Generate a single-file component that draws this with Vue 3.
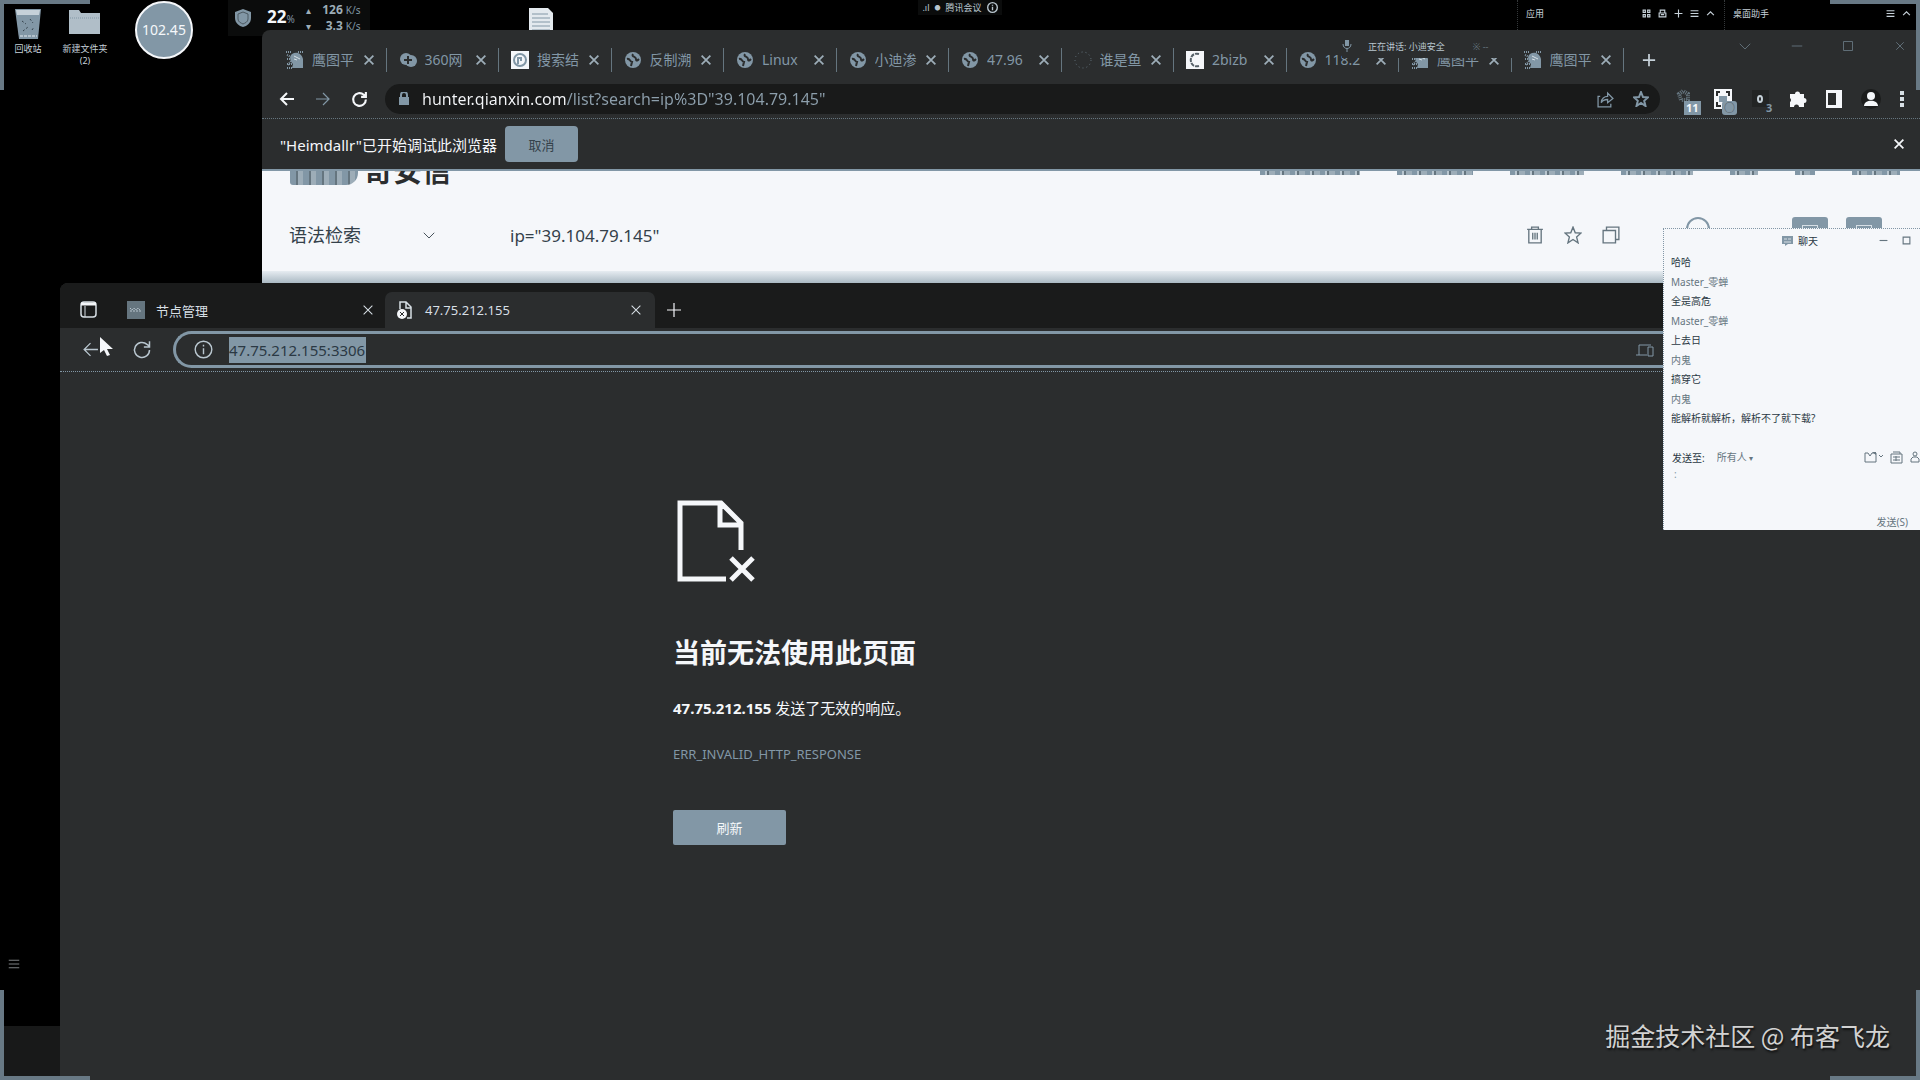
<template>
  <div class="desktop">
    <svg class="sprite" aria-hidden="true">
      <symbol id="close" viewBox="0 0 16 16"><path d="M3 3l10 10M13 3L3 13" /></symbol>
      <symbol id="plus" viewBox="0 0 16 16"><path d="M8 1v14M1 8h14" /></symbol>
      <symbol id="back" viewBox="0 0 16 16"><path d="M15 8H2M8 2L2 8l6 6" /></symbol>
      <symbol id="forward" viewBox="0 0 16 16"><path d="M1 8h13M8 2l6 6-6 6" /></symbol>
      <symbol id="reload" viewBox="0 0 16 16"><path d="M14 8a6 6 0 1 1-2-4.500L14 5M14 1v4.500H9.500" /></symbol>
      <symbol id="info" viewBox="0 0 16 16"><circle cx="8" cy="8" r="7" /><path d="M8 7v5M8 4v1.500" /></symbol>
      <symbol id="menu" viewBox="0 0 16 16"><path d="M1 3h14M1 8h14M1 13h14" /></symbol>
      <symbol id="up" viewBox="0 0 16 16"><path d="M2 11l6-6 6 6" /></symbol>
      <symbol id="down" viewBox="0 0 16 16"><path d="M1 5l7 7 7-7" /></symbol>
      <symbol id="square" viewBox="0 0 16 16"><path d="M2 2h12v12H2z" /></symbol>
      <symbol id="minus" viewBox="0 0 16 16"><path d="M1 8h14" /></symbol>
      <symbol id="grid" viewBox="0 0 16 16"><path d="M2 2h4v4H2zM10 2h4v4h-4zM2 10h4v4H2zM10 10h4v4h-4z" /></symbol>
      <symbol id="lockbox" viewBox="0 0 16 16"><path d="M4 7V2h8v5M2 7h12v7H2zM5 10h6" /></symbol>
      <symbol id="star" viewBox="0 0 16 16"><path d="M8 1l2 5 5 .4-3.800 3.400L12.500 15 8 12l-4.500 3 1.300-5.200L1 6.400 6 6z" /></symbol>
      <symbol id="share" viewBox="0 0 16 16"><path d="M3 5H1v10h12v-3M4 11c0-4 3-6 6-6V2l5 5-5 4V8c-3 0-5 1-6 3z" /></symbol>
      <symbol id="trash" viewBox="0 0 16 16"><path d="M1 3h14M5 3V1h6v2M2.500 3v12h11V3M6 6v6M8 6v6M10 6v6" /></symbol>
      <symbol id="copy" viewBox="0 0 16 16"><path d="M1 4h11v11H1zM4 4V1h11v11h-3" /></symbol>
      <symbol id="globe" viewBox="0 0 18 18">
        <circle cx="9" cy="9" r="8" fill="#8297a6" stroke="none" />
        <path d="M3 8c3-1 3 3 5 3l-1 4M9 3c-2 3 3 2 3 5s2 1 3 0" stroke="#2b2d2e" stroke-width="2" />
      </symbol>
      <symbol id="eagle" viewBox="0 0 18 18">
        <path d="M6 3c5-3 10 0 11 5v9H6l1-4C5 11 3 7 5 4z" fill="#8297a6" stroke="none" />
        <path d="M0 1h6M12 1h5M1 4l4 2M1 8h4M5 10l-3 4M1 13h5M1 17h6" stroke="#8297a6" stroke-dasharray="1 1" stroke-width="2" />
        <path d="M8 5l6 3M8 8l3 1" stroke="#d7dfe5" />
      </symbol>
      <symbol id="cross360" viewBox="0 0 18 18">
        <circle cx="7" cy="8" r="6" fill="#8297a6" stroke="none" /><circle cx="12" cy="10" r="6" fill="#8297a6" stroke="none" />
        <path d="M9 5v8M5 9h8" stroke="#2b2d2e" stroke-width="2" />
      </symbol>
      <symbol id="search-site" viewBox="0 0 18 18">
        <path d="M0 0h18v18H0z" fill="#f5f7fa" stroke="none" /><circle cx="9" cy="9" r="6" stroke="#8297a6" stroke-width="2" /><path d="M7 13V7h3v3" stroke="#8297a6" stroke-width="2" />
      </symbol>
      <symbol id="loading" viewBox="0 0 18 18"><circle cx="9" cy="9" r="8" stroke="#65757f" stroke-dasharray="1 3" /></symbol>
      <symbol id="crescent" viewBox="0 0 18 18">
        <path d="M0 0h18v18H0z" fill="#f5f7fa" stroke="none" /><path d="M13 3C2 0 2 18 13 15" stroke="#556068" stroke-width="2" stroke-dasharray="4 1" />
      </symbol>
    </svg>

    <i class="edge top-left"></i><i class="edge top-right"></i>
    <i class="edge bottom-left"></i><i class="edge bottom-right"></i>
    <div class="taskbar-stub"></div>

    <!-- Desktop shortcuts -->
    <div class="shortcuts">
      <a class="shortcut" href="#">
        <svg width="28" height="32" viewBox="0 0 28 32"><path d="M1 1h26l-3 30H5z" fill="#8297a6" /><path d="M2 2h24l-1 5H3z" fill="#c6d1d9" /><path d="M8 13l4 3M16 11l3 4M9 23l5-4M18 22l2-3" stroke="#34414a" stroke-dasharray="2 2" /><path d="M6 28h17" stroke="#e6ecf1" stroke-dasharray="3 1" /></svg>
        <span>回收站</span>
      </a>
      <a class="shortcut" href="#">
        <svg width="32" height="32" viewBox="0 0 32 32"><path d="M0 2h10l2 3h19v21H0z" fill="#b0bec8" /><path d="M1 10h29" stroke="#8297a6" stroke-dasharray="1 1" /></svg>
        <span>新建文件夹<br />(2)</span>
      </a>
    </div>
    <div class="timer">102.45</div>
    <svg class="text-file" width="24" height="24" viewBox="0 0 24 24"><path d="M0 0h19l5 5v19H0z" fill="#e3e9ee" /><path d="M3 6h16M3 10h18M3 14h18M3 18h18M3 22h18" stroke="#8297a6" /></svg>
    <svg class="list-mark icon" width="12" height="14"><use href="#menu" /></svg>

    <div class="monitor">
      <svg width="18" height="20" viewBox="0 0 18 20"><path d="M9 1l8 3v6c0 5-4 8-8 9-4-1-8-4-8-9V4z" fill="#8297a6" /><path d="M9 4l5 2v5c0 3-3 4-5 5-2-1-5-2-5-5V6z" fill="none" stroke="#4b5860" /></svg>
      <div class="usage"><strong>22</strong><small>%</small></div>
      <div class="speeds">
        <div><i>▴</i><b>126</b><small>K/s</small></div>
        <div><i>▾</i><b>3.3</b><small>K/s</small></div>
      </div>
    </div>

    <div class="meeting-bar">
      <span>.ıl</span><span>●</span><span>腾讯会议</span>
      <svg class="icon bold" width="11" height="11"><use href="#info" /></svg>
    </div>

    <div class="panels">
      <div class="panel apps">
        <span>应用</span>
        <button v-for="n in ['grid', 'lockbox', 'plus', 'menu', 'up']" :key="n" class="plain" :aria-label="n">
          <svg class="icon bold" width="9" height="9"><use :href="'#' + n" /></svg>
        </button>
      </div>
      <div class="panel">
        <span>桌面助手</span>
        <button v-for="n in ['menu', 'up']" :key="n" class="plain" :aria-label="n">
          <svg class="icon bold" width="9" height="9"><use :href="'#' + n" /></svg>
        </button>
      </div>
    </div>

    <!-- Chrome window -->
    <section class="chrome">
      <div class="tabstrip">
        <div class="tabs">
          <div v-for="(tab, i) in tabs" :key="i" class="tab">
            <svg class="favicon" width="18" height="18"><use :href="'#' + tab.icon" /></svg>
            <span class="tab-label">{{ tab.label }}</span>
            <button class="plain" aria-label="关闭标签页"><svg class="icon bold" width="14" height="14"><use href="#close" /></svg></button>
          </div>
        </div>
        <button class="plain new-tab" aria-label="新标签页"><svg class="icon bold" width="14" height="14"><use href="#plus" /></svg></button>
        <div class="window-controls">
          <button v-for="n in ['down', 'minus', 'square', 'close']" :key="n" class="plain" :aria-label="n">
            <svg class="icon" width="12" height="12"><use :href="'#' + n" /></svg>
          </button>
        </div>
      </div>

      <div class="toolbar">
        <button class="plain" aria-label="后退"><svg class="icon bold" width="16" height="16"><use href="#back" /></svg></button>
        <button class="plain dim" aria-label="前进"><svg class="icon" width="16" height="16"><use href="#forward" /></svg></button>
        <button class="plain" aria-label="重新加载"><svg class="icon bold" width="17" height="17"><use href="#reload" /></svg></button>
        <div class="omnibox">
          <svg width="10" height="14" viewBox="0 0 10 14"><path d="M0 5h10v8H0z" fill="#8297a6" /><path d="M2 6V3a3 3 0 0 1 6 0v3" fill="none" stroke="#8297a6" stroke-width="2" /></svg>
          <input v-model="url" class="url" aria-label="地址" />
          <svg class="icon" width="17" height="17"><use href="#share" /></svg>
          <svg class="icon bold" width="16" height="16"><use href="#star" /></svg>
        </div>
        <div class="extensions">
          <button class="plain ext" aria-label="Heimdallr">
            <svg width="20" height="20" viewBox="0 0 20 20"><path d="M4 5l4-3 5 3v6H6z" fill="none" stroke="#65757f" stroke-dasharray="1 1" stroke-width="4" /></svg>
            <b class="badge">11</b>
          </button>
          <button class="plain ext" aria-label="二维码">
            <svg width="20" height="20" viewBox="0 0 20 20"><path d="M1 0h18v20H1z" fill="#f5f7fa" /><path d="M4 7V3h3M13 3h3v4M4 13v4h4" fill="none" stroke="#2b2d2e" stroke-width="2" /><path d="M6 7h8v6H6z" fill="#8297a6" /></svg>
            <b class="badge round">○</b>
          </button>
          <button class="plain ext" aria-label="代理">
            <svg width="20" height="20" viewBox="0 0 20 20"><path d="M1 1h17v17H1z" fill="#222424" /><ellipse cx="9" cy="10" rx="2" ry="3" fill="none" stroke="#c6d1d9" stroke-width="2" /></svg>
            <b class="badge bare">3</b>
          </button>
          <button class="plain ext" aria-label="扩展程序">
            <svg width="18" height="18" viewBox="0 0 18 18"><path d="M1 4h5a2.500 2.500 0 1 1 5 0h4v4a2.500 2.500 0 1 1 0 5v4h-5a2.500 2.500 0 0 0-5 0H1v-5a2.500 2.500 0 0 0 0-4z" fill="#f5f7fa" /></svg>
          </button>
          <button class="plain ext" aria-label="侧边栏">
            <svg width="18" height="18" viewBox="0 0 18 18"><path d="M1 0h16v18H1zM3 3v12h8V3z" fill="#f5f7fa" fill-rule="evenodd" /></svg>
          </button>
          <button class="plain ext" aria-label="用户">
            <svg width="20" height="20" viewBox="0 0 20 20"><circle cx="10" cy="10" r="10" fill="#1b1c1c" /><circle cx="10" cy="7" r="4" fill="#f5f7fa" /><path d="M3 17c0-7 14-7 14 0z" fill="#f5f7fa" /></svg>
          </button>
          <button class="plain ext" aria-label="菜单">
            <svg width="6" height="18" viewBox="0 0 6 18"><path d="M1 1h4v4H1zM1 7h4v4H1zM1 13h4v4H1z" fill="#d7dfe5" /></svg>
          </button>
        </div>
      </div>

      <div class="infobar">
        <span>"Heimdallr"已开始调试此浏览器</span>
        <button class="cancel">取消</button>
        <button class="plain push" aria-label="关闭"><svg class="icon bold" width="14" height="14"><use href="#close" /></svg></button>
      </div>

      <div class="page">
        <div class="page-head">
          <span class="logo-mark"></span>
          <strong class="logo">奇安信</strong>
          <div class="nav-tail">
            <i v-for="(w, i) in navWidths" :key="i" :style="{ width: w + 'px' }"></i>
          </div>
        </div>
        <div class="search-row">
          <label class="mode">
            <select aria-label="检索方式"><option>语法检索</option></select>
            <svg class="icon" width="12" height="12"><use href="#down" /></svg>
          </label>
          <input v-model="query" class="query" aria-label="查询语句" />
          <div class="search-icons">
            <button v-for="n in ['trash', 'star', 'copy']" :key="n" class="plain" :aria-label="n">
              <svg class="icon" width="18" height="18"><use :href="'#' + n" /></svg>
            </button>
          </div>
          <div class="search-actions">
            <svg width="24" height="36" viewBox="0 0 24 36"><circle cx="12" cy="12" r="11" fill="none" stroke="#8297a6" stroke-width="2" /></svg>
            <button class="action" aria-label="搜索"><i></i></button>
            <button class="action" aria-label="导出"><i></i></button>
          </div>
        </div>
        <div class="page-foot"></div>
      </div>
    </section>

    <div class="speaking">
      <svg width="10" height="12" viewBox="0 0 10 12"><path d="M3 0h4v6H3z" fill="#8297a6" /><path d="M1 4c0 6 8 6 8 0M5 9v3" fill="none" stroke="#8297a6" /></svg>
      <span>正在讲话: 小迪安全</span>
      <span class="dots">※ ⁃⁃</span>
    </div>

    <!-- Edge window -->
    <section class="msedge">
      <div class="edge-tabs">
        <svg width="17" height="17" viewBox="0 0 17 17"><rect x="1" y="1" width="15" height="15" rx="3" fill="none" stroke="#d7dfe5" stroke-width="1.500" /><path d="M1 3h15" stroke="#f5f7fa" stroke-width="3" /><path d="M5 5v11" stroke="#d7dfe5" /></svg>
        <div class="edge-tab first">
          <svg width="18" height="18" viewBox="0 0 18 18"><path d="M0 0h18v18H0z" fill="#65757f" /><path d="M3 10h12M3 7l2 2 2-2 2 2 2-2 2 2" stroke="#b9c6cf" fill="none" stroke-dasharray="2 1" /></svg>
          <span>节点管理</span>
          <button class="plain push" aria-label="关闭标签页"><svg class="icon" width="14" height="14"><use href="#close" /></svg></button>
        </div>
        <div class="edge-tab active">
          <svg width="18" height="20" viewBox="0 0 18 20"><path d="M4 9V2h6l5 5v11h-4M10 2v6h5" fill="none" stroke="#d7dfe5" stroke-width="1.500" /><circle cx="6" cy="14" r="5" fill="#f5f7fa" /><path d="M4 12l4 4M8 12l-4 4" stroke="#2b2d2e" /></svg>
          <span>47.75.212.155</span>
          <button class="plain push" aria-label="关闭标签页"><svg class="icon" width="14" height="14"><use href="#close" /></svg></button>
        </div>
        <button class="plain" aria-label="新建标签页"><svg class="icon" width="16" height="16"><use href="#plus" /></svg></button>
      </div>

      <div class="edge-bar">
        <button class="plain" aria-label="后退"><svg class="icon" width="17" height="17"><use href="#back" /></svg></button>
        <button class="plain" aria-label="刷新页面"><svg class="icon" width="20" height="20"><use href="#reload" /></svg></button>
        <div class="edge-address">
          <svg class="icon" width="19" height="19"><use href="#info" /></svg>
          <input v-model="address" class="selected" aria-label="地址栏" />
          <svg class="push" width="18" height="14" viewBox="0 0 18 14"><path d="M0 12h11M3 12V2h12M12 4h5v9h-5z" fill="none" stroke="#8297a6" /></svg>
        </div>
      </div>

      <main class="error">
        <svg width="78" height="82" viewBox="0 0 78 82">
          <path d="M49 79H3V3h41l20 20v27M43 3v22h21" fill="none" stroke="#f5f7fa" stroke-width="5" />
          <path d="M54 58l22 22M76 58L54 80" stroke="#f5f7fa" stroke-width="5" />
        </svg>
        <h1>当前无法使用此页面</h1>
        <p><strong>47.75.212.155</strong> 发送了无效的响应。</p>
        <p class="code">ERR_INVALID_HTTP_RESPONSE</p>
        <button class="refresh">刷新</button>
      </main>
    </section>

    <svg class="pointer" width="14" height="20" viewBox="0 0 14 20"><path d="M1 0v16l4-3 3 6 3-1-3-6h6z" fill="#f5f7fa" /></svg>

    <!-- Chat window -->
    <section class="chat">
      <div class="chat-head">
        <svg width="11" height="10" viewBox="0 0 11 10"><path d="M0 0h11v8H6l-3 2V8H0z" fill="#8297a6" /><path d="M2 3h3M6 3h3M2 6h7" stroke="#d7dfe5" /></svg>
        <span>聊天</span>
        <div class="chat-controls">
          <button v-for="n in ['minus', 'square', 'close']" :key="n" class="plain" :aria-label="n">
            <svg class="icon bold" width="9" height="9"><use :href="'#' + n" /></svg>
          </button>
        </div>
      </div>
      <ul class="messages">
        <li v-for="(m, i) in messages" :key="i" :class="{ author: m.author }">{{ m.text }}</li>
      </ul>
      <div class="send-to">
        <label for="target">发送至:</label>
        <select id="target"><option>所有人</option></select>
        <span class="caret">▾</span>
        <div class="chat-tools">
          <svg width="20" height="12" viewBox="0 0 20 12"><path d="M1 2h3l2 3 2-3h4v9H1zM15 4l2 2 2-2" fill="none" stroke="#65757f" /><path d="M8 1h4v3z" fill="#65757f" /></svg>
          <svg width="13" height="13" viewBox="0 0 13 13"><path d="M1 3h11v9H1zM3 1h7v2M3 6h7M3 9h7M6 5v5" fill="none" stroke="#65757f" /></svg>
          <svg width="11" height="12" viewBox="0 0 11 12"><circle cx="6" cy="3" r="2" fill="none" stroke="#65757f" /><path d="M2 11V8l2-2h4l2 2v3z" fill="none" stroke="#65757f" /></svg>
        </div>
      </div>
      <textarea v-model="draft" aria-label="消息"></textarea>
      <button class="plain send">发送(S)</button>
    </section>

    <div class="watermark">掘金技术社区 @ 布客飞龙</div>
  </div>
</template>

<script setup>
import { ref } from 'vue';

const url = ref('hunter.qianxin.com/list?search=ip%3D"39.104.79.145"');
const query = ref('ip="39.104.79.145"');
const address = ref('47.75.212.155:3306');
const draft = ref(':');

const tabs = [
  { icon: 'eagle', label: '鹰图平' },
  { icon: 'cross360', label: '360网' },
  { icon: 'search-site', label: '搜索结' },
  { icon: 'globe', label: '反制溯' },
  { icon: 'globe', label: 'Linux' },
  { icon: 'globe', label: '小迪渗' },
  { icon: 'globe', label: '47.96' },
  { icon: 'loading', label: '谁是鱼' },
  { icon: 'crescent', label: '2bizb' },
  { icon: 'globe', label: '118.2' },
  { icon: 'eagle', label: '鹰图平' },
  { icon: 'eagle', label: '鹰图平' },
];

const navWidths = [100, 76, 74, 72, 28, 20, 48];

const messages = [
  { text: '哈哈' },
  { text: 'Master_零蝉', author: true },
  { text: '全是高危' },
  { text: 'Master_零蝉', author: true },
  { text: '上去日' },
  { text: '内鬼', author: true },
  { text: '搞穿它' },
  { text: '内鬼', author: true },
  { text: '能解析就解析，解析不了就下载?' },
];
</script>

<style>
body { background: #000; }
</style>

<style scoped>
* { box-sizing: border-box; }

.desktop {
  position: relative;
  min-height: 100vh;
  overflow: hidden;
  background: #000;
  color: #f5f7fa;
  font-family: "Noto Sans", "Noto Sans CJK SC", sans-serif;
  font-size: 15px;
}

.sprite { position: absolute; width: 0; height: 0; }
.icon { fill: none; stroke: currentColor; stroke-width: 1.2; }
.icon.bold { stroke-width: 2; }
.favicon { fill: none; flex: none; }
svg { display: block; flex: none; }

.plain {
  display: flex;
  align-items: center;
  justify-content: center;
  background: none;
  border: 0;
  padding: 0;
  color: inherit;
  font: inherit;
}

input, select, textarea {
  background: none;
  border: 0;
  padding: 0;
  color: inherit;
  font: inherit;
  outline: none;
}

select { appearance: none; }
.push { margin-left: auto; }

/* Screen frame */
.edge {
  position: absolute;
  width: 90px;
  height: 90px;
  border: 0 solid #687985;
  z-index: 5;
  pointer-events: none;
}

.top-left { top: 0; left: 0; border-width: 4px 0 0 4px; }
.top-right { top: 0; right: 0; border-width: 4px 4px 0 0; }
.bottom-left { bottom: 0; left: 0; border-width: 0 0 4px 4px; }
.bottom-right { bottom: 0; right: 0; border-width: 0 4px 4px 0; }

.taskbar-stub {
  position: absolute;
  left: 0;
  bottom: 0;
  width: 60px;
  height: 54px;
  background: #181919;
}

/* Desktop items */
.shortcuts {
  position: absolute;
  top: 8px;
  left: 5px;
  display: flex;
  gap: 11px;
}

.shortcut {
  display: flex;
  flex-direction: column;
  align-items: center;
  gap: 3px;
  width: 46px;
  color: #c6d1d9;
  font-size: 9px;
  line-height: 12px;
  text-align: center;
  text-decoration: none;
  white-space: nowrap;
}

.timer {
  position: absolute;
  top: 1px;
  left: 135px;
  width: 58px;
  height: 58px;
  border: 2px solid #f5f7fa;
  border-radius: 50%;
  background: #8297a6;
  line-height: 54px;
  font-size: 14px;
  text-align: center;
}

.text-file { position: absolute; top: 8px; left: 529px; }
.list-mark { position: absolute; top: 957px; left: 8px; color: #8b8f92; }

.monitor {
  position: absolute;
  top: 0;
  left: 228px;
  display: flex;
  align-items: center;
  width: 142px;
  height: 36px;
  padding-left: 6px;
  background: #0b0c0c;
}

.usage { display: flex; align-items: baseline; margin-left: 15px; line-height: 20px; }
.usage strong { font-size: 17px; }
.usage small, .speeds small { color: #8297a6; font-size: 10px; }
.speeds { margin-left: 11px; color: #9dadb8; font-size: 12px; line-height: 16px; }
.speeds div { display: grid; grid-template-columns: 10px 24px 20px; gap: 3px; }
.speeds i { font-size: 10px; font-style: normal; }
.speeds b { text-align: right; }

.meeting-bar {
  position: absolute;
  top: 0;
  left: 918px;
  display: flex;
  align-items: center;
  justify-content: center;
  gap: 5px;
  width: 84px;
  height: 15px;
  background: #0b0c0c;
  color: #b9c6cf;
  font-size: 9px;
}

.meeting-bar span:nth-child(2) { font-size: 6px; }

.panels {
  position: absolute;
  top: 0;
  right: 0;
  display: flex;
  height: 30px;
  font-size: 9px;
  color: #c6d1d9;
}

.panel {
  display: flex;
  align-items: center;
  gap: 7px;
  width: 196px;
  padding: 0 9px 4px 8px;
  border-left: 1px dotted #34383a;
}

.panel span { margin-right: auto; }
.apps { width: 207px; }

/* Chrome */
.chrome {
  position: absolute;
  top: 30px;
  left: 262px;
  right: 0;
  background: #2b2d2e;
  border-radius: 8px 0 0 0;
}

.tabstrip {
  display: flex;
  align-items: center;
  height: 52px;
  padding: 8px 0 0 12px;
  color: #9dadb8;
}

.tabs { display: flex; flex: 1; min-width: 0; }

.tab {
  display: flex;
  align-items: center;
  flex: 1;
  min-width: 0;
  height: 24px;
  padding: 0 10px 0 12px;
  border-right: 1px solid #65757f;
}

.tab-label {
  flex: 1;
  min-width: 0;
  margin: 0 6px 0 8px;
  overflow: hidden;
  white-space: nowrap;
  color: #8297a6;
  font-size: 14px;
  line-height: 20px;
}

.new-tab { width: 50px; color: #c6d1d9; }

.window-controls {
  display: flex;
  justify-content: space-between;
  width: 246px;
  padding: 0 14px 28px 65px;
  color: #65757f;
}

.toolbar {
  display: flex;
  align-items: center;
  height: 37px;
  padding: 0 15px 2px 17px;
  border-bottom: 1px dotted #65757f;
}

.toolbar > .plain { margin-right: 20px; }
.toolbar .dim { color: #8297a6; }

.omnibox {
  display: flex;
  align-items: center;
  flex: 1;
  gap: 19px;
  height: 30px;
  margin-left: -3px;
  padding: 0 11px 0 14px;
  border-radius: 15px;
  background: #191a1a;
  color: #8297a6;
}

.url {
  flex: 1;
  min-width: 0;
  margin-left: -6px;
  background: linear-gradient(90deg, #f5f7fa 145px, #8d9fac 145px);
  background-clip: text;
  color: transparent;
  font-size: 16px;
}

.extensions {
  display: flex;
  justify-content: space-between;
  width: 230px;
  margin-left: 15px;
}

.ext { position: relative; height: 20px; }

.badge {
  position: absolute;
  top: 12px;
  left: 9px;
  padding: 0 2px;
  background: #8297a6;
  font-size: 11px;
  line-height: 14px;
}

.badge.round { border-radius: 3px; color: #556068; }
.badge.bare { left: 13px; background: none; color: #8297a6; }

.infobar {
  display: flex;
  align-items: center;
  height: 50px;
  padding: 0 14px 0 18px;
}

.cancel {
  width: 73px;
  height: 36px;
  margin-left: 8px;
  border: 0;
  border-radius: 4px;
  background: #8297a6;
  color: #34414a;
  font: inherit;
  font-size: 13px;
}

/* Page behind the Edge window */
.page {
  display: flex;
  flex-direction: column;
  height: 114px;
  background: #f5f7fa;
  color: #34414a;
}

.page-head {
  display: flex;
  align-items: flex-end;
  height: 16px;
  overflow: hidden;
  border-top: 2px solid #8297a6;
  padding-left: 28px;
}

.logo-mark {
  width: 68px;
  height: 14px;
  margin-right: 6px;
  background: repeating-linear-gradient(90deg, #8297a6 0 6px, #65757f 6px 8px, #9dadb8 8px 13px);
  border-radius: 0 0 12px 3px;
}

.logo { font-size: 29px; line-height: 29px; color: #2b2d2e; }

.nav-tail {
  display: flex;
  flex: 1;
  justify-content: flex-end;
  align-self: flex-start;
  gap: 37px;
  padding-right: 20px;
}

.nav-tail i {
  height: 4px;
  background: repeating-linear-gradient(90deg, #8297a6 0 5px, #b9c6cf 5px 7px, #65757f 7px 9px, #9dadb8 9px 15px);
}

.search-row {
  display: flex;
  align-items: center;
  flex: 1;
  min-height: 0;
  padding: 14px 38px 0 27px;
  font-size: 17px;
}

.mode { display: flex; align-items: center; width: 147px; }
.mode select { width: 134px; font-size: 18px; }
.query { flex: 1; min-width: 0; margin-left: 74px; }
.search-icons { display: flex; gap: 20px; color: #65757f; }
.search-actions { display: flex; align-items: flex-start; height: 36px; margin-left: 66px; }

.action {
  display: flex;
  justify-content: center;
  width: 36px;
  height: 36px;
  margin-left: 18px;
  padding-top: 8px;
  border: 0;
  border-radius: 3px;
  background: #8297a6;
}

.search-actions svg + .action { margin-left: 82px; }
.action i { width: 16px; height: 12px; border: 1px solid #d7dfe5; }

.page-foot { height: 12px; background: linear-gradient(#e6ecf1, #aab9c3); }

.speaking {
  position: absolute;
  top: 38px;
  right: 404px;
  display: flex;
  align-items: center;
  gap: 16px;
  width: 174px;
  height: 20px;
  padding-bottom: 4px;
  background: #2b2d2e;
  color: #b9c6cf;
  font-size: 9px;
  white-space: nowrap;
}

.dots { color: #65757f; margin-left: 12px; }

/* Edge */
.msedge {
  position: absolute;
  top: 283px;
  left: 60px;
  right: 0;
  bottom: 0;
  border-radius: 8px 8px 0 0;
  background: #2b2d2e;
  overflow: hidden;
}

.edge-tabs {
  display: flex;
  align-items: flex-end;
  height: 45px;
  padding-left: 20px;
  background: #1a1b1b;
  font-size: 13px;
}

.edge-tabs > svg { margin-bottom: 10px; }
.edge-tabs > .plain { height: 36px; margin-left: 11px; }

.edge-tab {
  display: flex;
  align-items: center;
  gap: 11px;
  height: 36px;
  color: #d7dfe5;
}

.edge-tab.first { width: 248px; margin-left: 30px; }

.edge-tab.active {
  width: 270px;
  margin-left: 10px;
  padding: 0 12px 0 11px;
  border-radius: 7px 7px 0 0;
  background: #2b2d2e;
}

.edge-bar {
  display: flex;
  align-items: center;
  gap: 33px;
  height: 44px;
  padding-left: 22px;
  border-bottom: 1px dotted #8297a6;
  color: #b9c6cf;
}

.edge-address {
  display: flex;
  align-items: center;
  flex: 1;
  gap: 16px;
  height: 37px;
  margin-left: -12px;
  padding: 0 266px 0 18px;
  border: 3px solid #8297a6;
  border-right: 0;
  border-radius: 19px 0 0 19px;
}

.selected {
  width: 137px;
  height: 26px;
  background: #8297a6;
  color: #2b3944;
}

.error { padding: 128px 0 0 613px; }
.error > svg { margin-left: 4px; }

.error h1 {
  margin: 53px 0 0;
  font-size: 27px;
  font-weight: 700;
  line-height: 36px;
}

.error p { margin: 25px 0 0; font-size: 15px; line-height: 24px; }
.error p.code { margin-top: 22px; color: #8297a6; font-size: 13px; }

.refresh {
  width: 113px;
  height: 35px;
  margin-top: 44px;
  border: 0;
  border-radius: 2px;
  background: #8297a6;
  color: #f5f7fa;
  font: inherit;
  font-size: 13px;
}

.pointer { position: absolute; top: 337px; left: 99px; }

/* Chat */
.chat {
  position: absolute;
  top: 228px;
  right: 0;
  display: flex;
  flex-direction: column;
  width: 257px;
  height: 302px;
  overflow: hidden;
  border: 1px dotted #8297a6;
  border-width: 1px 0 0 1px;
  background: #f5f7fa;
  color: #2b3944;
  font-size: 10px;
  white-space: nowrap;
}

.chat-head {
  display: flex;
  align-items: center;
  flex: none;
  gap: 5px;
  height: 23px;
  padding-left: 118px;
}

.chat-controls { display: flex; gap: 14px; margin-left: 56px; color: #65757f; }

.messages {
  flex: 1;
  margin: 0;
  padding: 0 7px;
  list-style: none;
}

.messages li { height: 20px; line-height: 20px; }
.messages li:nth-child(even) { height: 19px; }
.messages .author { color: #65757f; }

.send-to {
  display: flex;
  align-items: center;
  flex: none;
  height: 20px;
  padding-left: 8px;
}

.send-to select { width: 32px; margin-left: 12px; color: #65757f; }
.caret { color: #65757f; font-size: 8px; }
.chat-tools { display: flex; align-items: center; gap: 6px; margin-left: auto; }

textarea {
  flex: none;
  height: 45px;
  padding: 0 10px;
  resize: none;
  color: #8297a6;
}

.send { align-self: flex-end; flex: none; height: 18px; margin-right: 12px; color: #65757f; }

.watermark {
  position: absolute;
  right: 30px;
  bottom: 26px;
  color: #d2d2d2;
  font-family: "Noto Sans CJK SC", sans-serif;
  font-size: 25px;
  line-height: 37px;
  text-shadow: 1px 2px 2px #111;
}
</style>
